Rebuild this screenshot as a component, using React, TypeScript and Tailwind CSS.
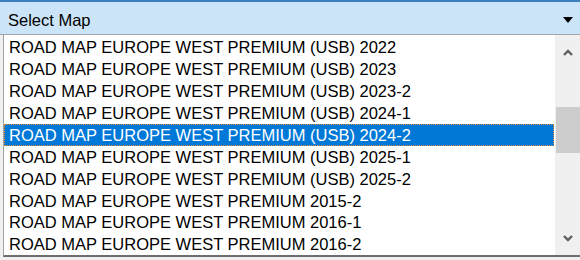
import { useState } from 'react';

const maps = [
  'ROAD MAP EUROPE WEST PREMIUM (USB) 2022',
  'ROAD MAP EUROPE WEST PREMIUM (USB) 2023',
  'ROAD MAP EUROPE WEST PREMIUM (USB) 2023-2',
  'ROAD MAP EUROPE WEST PREMIUM (USB) 2024-1',
  'ROAD MAP EUROPE WEST PREMIUM (USB) 2024-2',
  'ROAD MAP EUROPE WEST PREMIUM (USB) 2025-1',
  'ROAD MAP EUROPE WEST PREMIUM (USB) 2025-2',
  'ROAD MAP EUROPE WEST PREMIUM 2015-2',
  'ROAD MAP EUROPE WEST PREMIUM 2016-1',
  'ROAD MAP EUROPE WEST PREMIUM 2016-2',
];

export default function App() {
  const [selected, setSelected] = useState(4);

  return (
    <div className="w-[580px] h-[260px] bg-[#f0f0f0] overflow-hidden text-black text-[16.5px] leading-none font-['Liberation_Sans',Arial,sans-serif]">
      {/* combo header */}
      <div className="h-[35px] flex items-center justify-between pl-2 pr-[7px] bg-[#cce4f7] border-t-2 border-[#3d7ec0] border-b border-b-[#a6a6a6]">
        <span className="pt-[4px]">Select Map</span>
        <svg width="10" height="6" viewBox="0 0 10 6" className="mt-[3px]">
          <path d="M0 0 H10 L5 6 Z" fill="#000" />
        </svg>
      </div>

      {/* dropdown list */}
      <div className="flex ml-[3px] h-[222px] bg-white border-l border-[#a0a0a0] border-b-2 border-b-[#6e6e6e]">
        <div className="flex-1 flex flex-col pt-[1px]">
          {maps.map((m, i) => (
            <div
              key={m}
              onClick={() => setSelected(i)}
              className={
                i === selected
                  ? 'h-[22px] w-[550px] flex items-center pl-[5px] pt-[1px] bg-[#0078d7] text-white outline-1 outline-dotted outline-[#d98a3a] -outline-offset-1'
                  : 'h-[22px] flex items-center pl-[5px] pt-[1px]'
              }
            >
              {m}
            </div>
          ))}
        </div>

        {/* scrollbar */}
        <div className="w-[25px] bg-[#f0f0f0] flex flex-col items-center">
          <div className="h-[30px] w-full flex items-center justify-center pt-[4px]">
            <svg width="10" height="7" viewBox="0 0 10 7">
              <path d="M1 6 L5 2 L9 6" stroke="#606060" strokeWidth="2.4" fill="none" />
            </svg>
          </div>
          <div className="h-[42px]" />
          <div className="h-[46px] w-[24px] ml-[1px] bg-[#cdcdcd]" />
          <div className="flex-1" />
          <div className="h-[28px] w-full flex items-center justify-center pb-[6px]">
            <svg width="10" height="7" viewBox="0 0 10 7">
              <path d="M1 1 L5 5 L9 1" stroke="#606060" strokeWidth="2.4" fill="none" />
            </svg>
          </div>
        </div>
      </div>
    </div>
  );
}
